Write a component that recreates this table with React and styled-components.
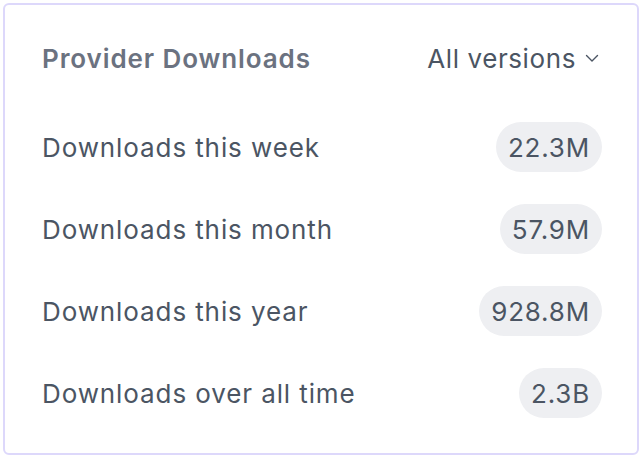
import styled, { createGlobalStyle } from "styled-components";

const GlobalStyle = createGlobalStyle`
  html, body {
    margin: 0;
    padding: 0;
    background: #ffffff;
  }
  body {
    font-family: Inter, "Noto Sans", "Liberation Sans", sans-serif;
    -webkit-font-smoothing: antialiased;
  }
`;

const Page = styled.div`
  padding: 3px;
  width: 642px;
  height: 458px;
  box-sizing: border-box;
`;

const Card = styled.section`
  box-sizing: border-box;
  width: 636px;
  height: 452px;
  border: 2px solid #ddd8fb;
  border-radius: 6px;
  padding: 28px 35px 17px 37px;
  display: flex;
  flex-direction: column;
`;

const Header = styled.div`
  height: 50px;
  display: flex;
  align-items: center;
  justify-content: space-between;
  margin-bottom: 23px;
`;

const Title = styled.h3`
  margin: 0;
  font-size: 26px;
  font-weight: 600;
  letter-spacing: 0.9px;
  color: #6b7280;
`;

const VersionPicker = styled.button`
  display: flex;
  align-items: center;
  gap: 9px;
  border: none;
  background: none;
  padding: 0;
  margin-right: 3px;
  font: inherit;
  font-size: 26px;
  letter-spacing: 0.6px;
  color: #4b5563;
  cursor: pointer;
`;

const List = styled.ul`
  list-style: none;
  margin: 0;
  padding: 0;
`;

const Row = styled.li`
  height: 82px;
  display: flex;
  align-items: center;
  justify-content: space-between;
`;

const Label = styled.span`
  font-size: 26px;
  letter-spacing: 0.9px;
  color: #4b5563;
`;

const Pill = styled.span`
  display: inline-flex;
  align-items: center;
  height: 50px;
  padding: 0 12px;
  border-radius: 25px;
  background: #eeeff2;
  font-size: 26px;
  letter-spacing: 0.8px;
  color: #4b5563;
`;

const stats = [
  { label: "Downloads this week", value: "22.3M" },
  { label: "Downloads this month", value: "57.9M" },
  { label: "Downloads this year", value: "928.8M" },
  { label: "Downloads over all time", value: "2.3B" },
];

export default function App() {
  return (
    <>
      <GlobalStyle />
      <Page>
        <Card>
          <Header>
            <Title>Provider Downloads</Title>
            <VersionPicker>
              All versions
              <svg width="14" height="14" viewBox="0 0 14 14" fill="none">
                <path d="M1.5 4.5L7 10l5.5-5.5" stroke="#4b5563" strokeWidth="1.4" strokeLinecap="round" strokeLinejoin="round" />
              </svg>
            </VersionPicker>
          </Header>
          <List>
            {stats.map((s) => (
              <Row key={s.label}>
                <Label>{s.label}</Label>
                <Pill>{s.value}</Pill>
              </Row>
            ))}
          </List>
        </Card>
      </Page>
    </>
  );
}
